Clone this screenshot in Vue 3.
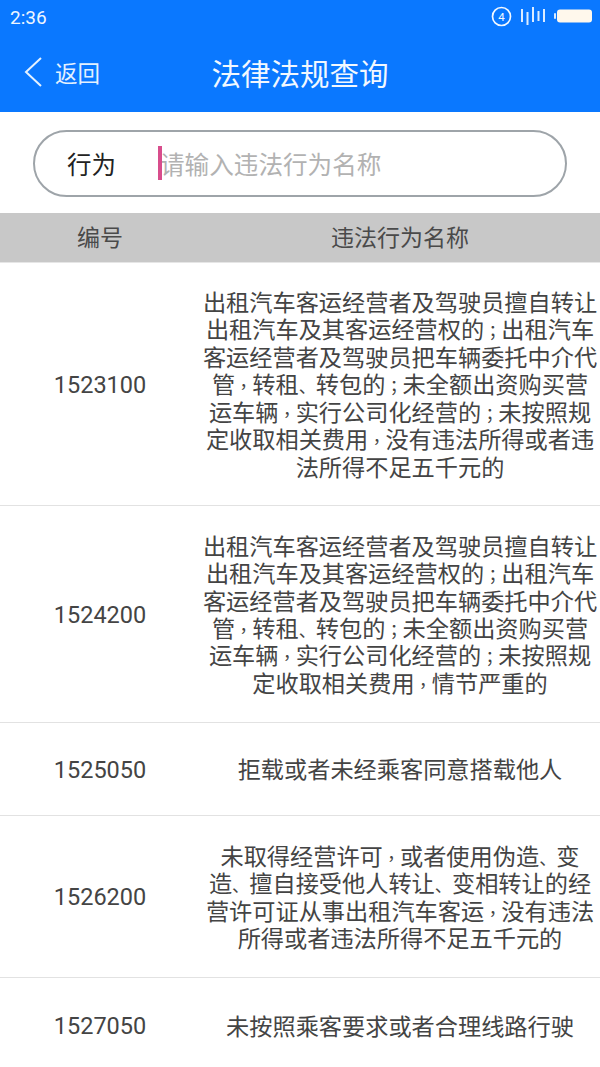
<script setup>
const raw = [
  { id: '1523100', h: 'r1', lines: ['出租汽车客运经营者及驾驶员擅自转让','出租汽车及其客运经营权的；出租汽车','客运经营者及驾驶员把车辆委托中介代','管，转租、转包的；未全额出资购买营','运车辆，实行公司化经营的；未按照规','定收取相关费用，没有违法所得或者违','法所得不足五千元的'] },
  { id: '1524200', h: 'r2', lines: ['出租汽车客运经营者及驾驶员擅自转让','出租汽车及其客运经营权的；出租汽车','客运经营者及驾驶员把车辆委托中介代','管，转租、转包的；未全额出资购买营','运车辆，实行公司化经营的；未按照规','定收取相关费用，情节严重的'] },
  { id: '1525050', h: 'r3', lines: ['拒载或者未经乘客同意搭载他人'] },
  { id: '1526200', h: 'r4', lines: ['未取得经营许可，或者使用伪造、变','造、擅自接受他人转让、变相转让的经','营许可证从事出租汽车客运，没有违法','所得或者违法所得不足五千元的'] },
  { id: '1527050', h: 'r5', lines: ['未按照乘客要求或者合理线路行驶'] }
]
const rows = raw.map(r => ({
  ...r,
  lines: r.lines.map(l => l.split(/([，；、])/).filter(Boolean))
}))
const punct = s => s === '、' ? 'pd' : (s === '，' || s === '；') ? 'pc' : ''
</script>

<template>
  <div class="page">
    <header class="top">
      <div class="status">
        <span class="time">2:36</span>
        <div class="status-icons">
          <svg width="21" height="21" viewBox="0 0 21 21"><circle cx="10.5" cy="10.5" r="9" fill="none" stroke="#f2f8ff" stroke-width="1.7"/><text x="10.5" y="14.5" text-anchor="middle" font-size="11.5" fill="#f2f8ff" font-family="Roboto, sans-serif">4</text></svg>
          <svg width="26" height="20" viewBox="0 0 26 20"><path d="M2 3v13M7.500 6v13M13 1v15M18.500 5v10M24 3v13" stroke="#dcecff" stroke-width="2" fill="none"/></svg>
          <svg width="38" height="14" viewBox="0 0 38 14"><rect x="0" y="4" width="2" height="6" rx="1" fill="#dcecff"/><rect x="3" y="0.5" width="35" height="13" rx="3" fill="#fff8ec"/></svg>
        </div>
      </div>
      <nav class="nav">
        <div class="back">
          <svg width="20" height="32" viewBox="0 0 20 32"><path d="M18 2 3 16l15 14" fill="none" stroke="#e4f1ff" stroke-width="2"/></svg>
          <span>返回</span>
        </div>
        <h1>法律法规查询</h1>
      </nav>
    </header>

    <div class="search-wrap">
      <div class="search">
        <span class="label">行为</span>
        <div class="field">
          <i class="caret"></i>
          <span class="placeholder">请输入违法行为名称</span>
        </div>
      </div>
    </div>

    <div class="thead">
      <div class="c1">编号</div>
      <div class="c2">违法行为名称</div>
    </div>

    <div v-for="r in rows" :key="r.id" class="row" :class="r.h">
      <div class="c1">{{ r.id }}</div>
      <div class="c2"><div v-for="(l, i) in r.lines" :key="i"><span v-for="(s, j) in l" :key="j" :class="punct(s)">{{ s }}</span></div></div>
    </div>
  </div>
</template>

<style>
html, body { margin: 0; background: #fff; }
</style>

<style scoped>
.page {
  width: 600px;
  height: 1067px;
  overflow: hidden;
  background: #fff;
  font-family: "Noto Sans CJK SC", "Liberation Sans", sans-serif;
}
.top { height: 112px; background: #0a78ff; color: #fff; }
.status { height: 35px; display: flex; justify-content: space-between; align-items: center; padding: 0 8px 0 10px; }
.time { font: 19px Roboto, sans-serif; color: #eef6ff; }
.status-icons { display: flex; align-items: center; gap: 8px; margin-bottom: 3px; }
.nav { height: 77px; position: relative; display: flex; align-items: center; justify-content: center; }
.nav h1 { margin: 0 0 2px; font-size: 29.5px; font-weight: 400; line-height: 1; color: #f2f8ff; }
.back { position: absolute; left: 23px; top: 21px; display: flex; align-items: center; gap: 12px; font-size: 22.5px; color: #e4f1ff; line-height: 32px; }
.search-wrap { height: 101px; padding: 18px 33px 0; box-sizing: border-box; }
.search { width: 534px; height: 67px; box-sizing: border-box; border: 2px solid #9ea4a9; border-radius: 34px; display: flex; align-items: center; }
.label { margin-left: 32px; width: 93px; font-size: 24.5px; color: #222; }
.field { display: flex; align-items: center; position: relative; padding-bottom: 2px; }
.caret { position: absolute; left: -2px; top: 1px; width: 4px; height: 34px; background: #d84d8c; }
.placeholder { font-size: 24.6px; color: #b2b2b2; }
.thead { height: 46px; padding-bottom: 3px; background: #c8c8c8; display: flex; align-items: center; font-size: 23px; color: #4a4a4a; border-bottom: 1px solid #e6e6e6; }
.c1 { width: 200px; text-align: center; }
.c2 { flex: 1; text-align: center; white-space: nowrap; }
.row { display: flex; align-items: center; box-sizing: border-box; border-bottom: 1px solid #e2e2e2; font-size: 23.2px; line-height: 27.4px; color: #444; }
.row .c1 { font: 23.5px Roboto, sans-serif; color: #444; padding-top: 1px; }
.pc { font-family: "Noto Sans CJK TC", sans-serif; font-size: 17.2px; line-height: 1; }
.pd { font-size: 17.2px; line-height: 1; }
.r1 { height: 243px; }
.r2 { height: 217px; }
.r3 { height: 93px; }
.r4 { height: 162px; }
.r5 { height: 95px; border-bottom: none; }
</style>
